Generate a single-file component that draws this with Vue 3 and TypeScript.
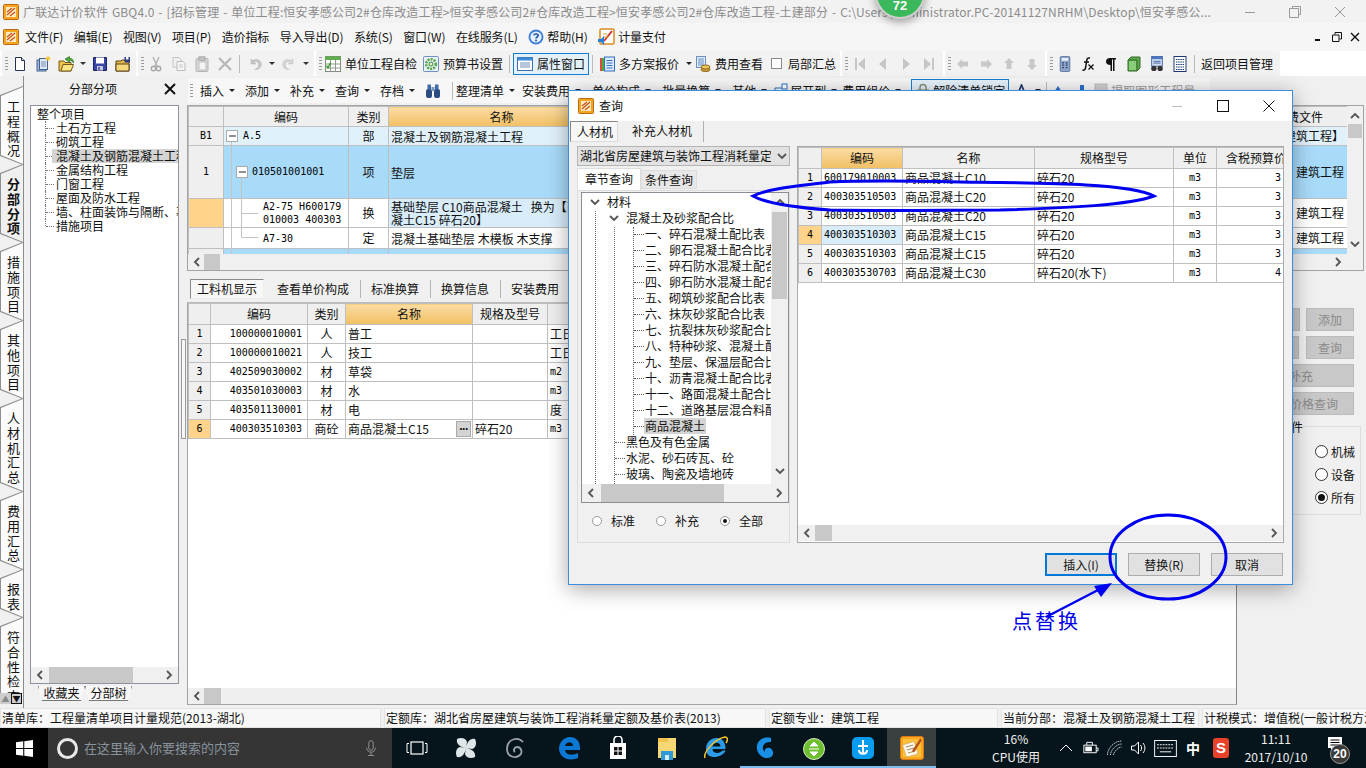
<script setup lang="ts">
interface TbItem {
  icon?: string
  text?: string
  caret?: boolean
  sep?: boolean
  grip?: boolean
  box?: boolean
  check?: boolean
  off?: boolean
  m?: number
  ml?: number
}

const menus = ['文件(F)', '编辑(E)', '视图(V)', '项目(P)', '造价指标', '导入导出(D)', '系统(S)', '窗口(W)', '在线服务(L)']

const toolGroups: { w: number; items: TbItem[] }[] = [
  { w: 134, items: [{ grip: true }, { icon: 'doc' }, { icon: 'docs' }, { icon: 'open' }, { caret: true }, { icon: 'save' }, { icon: 'saveas' }] },
  { w: 176, items: [{ grip: true }, { icon: 'cut' }, { icon: 'copy' }, { icon: 'paste' }, { icon: 'del' }, { sep: true }, { icon: 'undo' }, { caret: true }, { icon: 'redo' }, { caret: true }] },
  {
    w: 524,
    items: [
      { grip: true },
      { icon: 'check', text: '单位工程自检' },
      { icon: 'gear', text: '预算书设置' },
      { sep: true },
      { icon: 'prop', text: '属性窗口', box: true },
      { sep: true },
      { icon: 'multi', text: '多方案报价', caret: true },
      { icon: 'fee', text: '费用查看', ml: -3 },
      { check: true, text: '局部汇总' },
    ],
  },
  { w: 101, items: [{ grip: true }, { icon: 'first' }, { icon: 'prev' }, { icon: 'next' }, { icon: 'last' }] },
  { w: 100, items: [{ grip: true }, { icon: 'aleft' }, { icon: 'aright' }, { icon: 'aup' }, { icon: 'adown' }] },
  {
    w: 233,
    items: [
      { grip: true },
      { icon: 'calc' },
      { icon: 'fx' },
      { icon: 'para' },
      { icon: 'cube' },
      { icon: 'sheet' },
      { icon: 'list' },
      { sep: true },
      { text: '返回项目管理' },
    ],
  },
]

const tool2: TbItem[] = [
  { grip: true },
  { text: '插入', caret: true, m: 8 },
  { text: '添加', caret: true, m: 8 },
  { text: '补充', caret: true, m: 8 },
  { text: '查询', caret: true, m: 8 },
  { text: '存档', caret: true, m: 8 },
  { icon: 'bino', m: 8 },
  { sep: true },
  { text: '整理清单', caret: true, m: 5 },
  { text: '安装费用', caret: true, m: 9 },
  { text: '单价构成', caret: true, m: 9 },
  { text: '批量换算', caret: true, m: 9 },
  { text: '其他', caret: true, m: 3 },
  { icon: 'expand', text: '展开到', caret: true, m: 3 },
  { text: '费用组价', caret: true, m: 9 },
  { icon: 'lock', text: '解除清单锁定', box: true, m: 4 },
  { icon: 'font', caret: true, m: 2 },
  { sep: true },
  { icon: 'bup', m: 6 },
  { icon: 'bdown', m: 1 },
  { icon: 'pic', text: '提取图形工程量', off: true, m: 0 },
]

const sideTabs = ['工程概况', '分部分项', '措施项目', '其他项目', '人材机汇总', '费用汇总', '报表', '符合性检查']
const tabHeight = (t: string) => `${15 * t.length + 19}px`

const treeItems = ['土石方工程', '砌筑工程', '混凝土及钢筋混凝土工程', '金属结构工程', '门窗工程', '屋面及防水工程', '墙、柱面装饰与隔断、幕墙工程', '措施项目']

const upperCols = [35, 125, 40, 226, 652, 81]
const upperRows = [
  { cls: 'r-part', head: 'B1', code: 'A.5', kind: '部', name: '混凝土及钢筋混凝土工程', file: '【建筑工程】', pad: 'p1' },
  { cls: 'r-item', head: '1', code: '010501001001', kind: '项', name: '垫层', file: '建筑工程', pad: 'p2' },
  { cls: 'r-swap', head: '', code: 'A2-75 H600179 010003 400303', kind: '换', name: '基础垫层 C10商品混凝土\u00a0\u00a0\u00a0换为【商品混凝土C15 碎石20】', file: '建筑工程', pad: 'p3' },
  { cls: 'r-norm', head: '', code: 'A7-30', kind: '定', name: '混凝土基础垫层 木模板 木支撑', file: '建筑工程', pad: 'p3' },
  { cls: 'r-tail', head: '', code: '', kind: '', name: '', file: '', pad: 'p1' },
]

const lowerTabs = ['工料机显示', '查看单价构成', '标准换算', '换算信息', '安装费用']
const lowerCols = [22, 97, 38, 127, 75, 690]
const lowerRows = [
  ['1', '100000010001', '人', '普工', '', '工日'],
  ['2', '100000010021', '人', '技工', '', '工日'],
  ['3', '402509030002', '材', '草袋', '', 'm2'],
  ['4', '403501030003', '材', '水', '', 'm3'],
  ['5', '403501130001', '材', '电', '', '度'],
  ['6', '400303510303', '商砼', '商品混凝土C15', '碎石20', 'm3'],
]

const sideButtons = [
  { t: '添加', cls: 'narrow', twin: 'twin-a' },
  { t: '查询', cls: 'narrow', twin: 'twin-b' },
  { t: '补充', cls: 'wide w-a', twin: '' },
  { t: '价格查询', cls: 'wide w-b', twin: '' },
]
const sideRadios = ['机械', '设备', '所有']

const dlgTree = [
  { t: '材料', lv: 0, open: true },
  { t: '混凝土及砂浆配合比', lv: 1, open: true },
  { t: '一、碎石混凝土配比表', lv: 2 },
  { t: '二、卵石混凝土配合比表', lv: 2 },
  { t: '三、碎石防水混凝土配合比表', lv: 2 },
  { t: '四、卵石防水混凝土配合比表', lv: 2 },
  { t: '五、砌筑砂浆配合比表', lv: 2 },
  { t: '六、抹灰砂浆配合比表', lv: 2 },
  { t: '七、抗裂抹灰砂浆配合比表', lv: 2 },
  { t: '八、特种砂浆、混凝土配合比表', lv: 2 },
  { t: '九、垫层、保温层配合比表', lv: 2 },
  { t: '十、沥青混凝土配合比表', lv: 2 },
  { t: '十一、路面混凝土配合比表', lv: 2 },
  { t: '十二、道路基层混合料配合比表', lv: 2 },
  { t: '商品混凝土', lv: 2, sel: true },
  { t: '黑色及有色金属', lv: 1 },
  { t: '水泥、砂石砖瓦、砼', lv: 1 },
  { t: '玻璃、陶瓷及墙地砖', lv: 1 },
]

const dlgCols = [23, 81, 132, 139, 43, 67]
const dlgRows = [
  ['600179010003', '商品混凝土C10', '碎石20', 'm3', '3'],
  ['400303510503', '商品混凝土C20', '碎石20', 'm3', '3'],
  ['400303510503', '商品混凝土C20', '碎石20', 'm3', '3'],
  ['400303510303', '商品混凝土C15', '碎石20', 'm3', '3'],
  ['400303510303', '商品混凝土C15', '碎石20', 'm3', '3'],
  ['400303530703', '商品混凝土C30', '碎石20(水下)', 'm3', '4'],
]

const statusPanes = [
  { w: 381, t: '清单库：工程量清单项目计量规范(2013-湖北)' },
  { w: 382, t: '定额库：湖北省房屋建筑与装饰工程消耗量定额及基价表(2013)' },
  { w: 229, t: '定额专业：建筑工程' },
  { w: 198, t: '当前分部：混凝土及钢筋混凝土工程' },
  { w: 165, t: '计税模式：增值税(一般计税方法)' },
]

const taskApps = [
  { icon: 'tb-fan' },
  { icon: 'tb-ring' },
  { icon: 'tb-edge', gap: true },
  { icon: 'tb-store' },
  { icon: 'tb-folder' },
  { icon: 'tb-ie' },
  { icon: 'tb-gbq', on: true },
  { icon: 'tb-green', on: true },
  { icon: 'tb-cross', on: true },
  { icon: 'tb-app', on: true, active: true },
]
</script>

<template>
  <div class="desk">
    <svg class="defs" width="0" height="0" aria-hidden="true">
      <symbol id="i-app" viewBox="0 0 16 16">
        <rect x=".5" y=".5" width="15" height="15" rx="1" fill="#f3a51f" stroke="#b96a10" />
        <rect x="3" y="3" width="10" height="10" fill="#fbe9c4" />
        <path d="M4 11 12 4M4 8l5-4M7 12l5-4" stroke="#c8541a" stroke-width="1.3" />
      </symbol>
      <symbol id="i-pay" viewBox="0 0 18 18">
        <rect x="2" y="1" width="14" height="15" rx="1" fill="#fff" stroke="#d98a20" stroke-width="1.5" />
        <path d="M6 13 14 3" stroke="#d0342a" stroke-width="2" />
        <path d="M5 9h5M5 6h4" stroke="#e0a040" />
        <path d="M0 11h3l3-3v9l-3-3H0z" fill="#2a7fd6" />
      </symbol>
      <symbol id="i-help" viewBox="0 0 16 16">
        <circle cx="8" cy="8" r="7.5" fill="#3f7fd8" />
        <circle cx="8" cy="8" r="5.6" fill="#e8f2ff" />
        <path d="M5.8 6.3C6 4.6 10.2 4.5 10.2 6.6 10.2 8 8 8 8 9.6" fill="none" stroke="#1d55b0" stroke-width="1.6" />
        <rect x="7.2" y="10.6" width="1.7" height="1.7" fill="#1d55b0" />
      </symbol>
      <symbol id="i-doc" viewBox="0 0 16 16">
        <path d="M3.5 1.5h6l3 3v10h-9z" fill="#fff" stroke="#26364f" />
        <path d="M9.5 1.5v3h3" fill="#d5dcea" stroke="#26364f" />
      </symbol>
      <symbol id="i-docs" viewBox="0 0 16 16">
        <rect x="2" y="4" width="9" height="11" fill="#9db7de" stroke="#44618f" />
        <rect x="4.500" y="2.500" width="8" height="11" fill="#dfe8f5" stroke="#44618f" />
        <path d="M6 6h5M6 8h5M6 10h5" stroke="#7890b5" />
        <path d="M13 0v5M10.500 2.500h5M11.300 .8l3.400 3.400M14.700 .8l-3.400 3.400" stroke="#f3c41f" />
      </symbol>
      <symbol id="i-open" viewBox="0 0 16 16">
        <path d="M1 5h5l1 1.500h6V15H1z" fill="#edc24a" stroke="#76591a" />
        <path d="M3 15 5 8.500h10.500L13 15z" fill="#fbe388" stroke="#76591a" />
        <path d="M7 3 11.500 .5V2.300C14.500 2.300 15.500 4 15.500 7 14.500 5 13 4.500 11.500 4.500V6.500z" fill="#4fa83a" stroke="#26681c" stroke-width=".6" />
      </symbol>
      <symbol id="i-save" viewBox="0 0 16 16">
        <path d="M1.500 1.500h13v13h-13z" fill="#3846a4" stroke="#1d2560" />
        <rect x="4" y="1.500" width="8" height="6" fill="#fff" />
        <rect x="5" y="10" width="6" height="4.500" fill="#c7cbe0" />
        <rect x="6.300" y="11" width="1.500" height="3" fill="#3846a4" />
      </symbol>
      <symbol id="i-saveas" viewBox="0 0 16 16">
        <path d="M1 5h5l1-1h7v11H1z" fill="#e7b84a" stroke="#5a4314" />
        <path d="M1 8h13v7H1z" fill="#f6d97c" stroke="#5a4314" />
        <rect x="9.500" y="1" width="5.500" height="5.500" fill="#2c3a84" />
        <rect x="11" y="1" width="2.500" height="2.500" fill="#fff" />
      </symbol>
      <symbol id="i-cut" viewBox="0 0 16 16">
        <path d="M5 1 9 10M11 1 7 10" stroke="#b9b9b9" stroke-width="1.600" />
        <circle cx="5.500" cy="12.500" r="2.200" fill="none" stroke="#a8a8a8" stroke-width="1.400" />
        <circle cx="10.500" cy="12.500" r="2.200" fill="none" stroke="#a8a8a8" stroke-width="1.400" />
      </symbol>
      <symbol id="i-copy" viewBox="0 0 16 16">
        <path d="M2 1.500h6l2 2V11H2z" fill="#f0f0f0" stroke="#c2c2c2" />
        <path d="M6 5.500h6l2 2v7H6z" fill="#f4f4f4" stroke="#bcbcbc" />
        <path d="M8 9h4M8 11h4" stroke="#cacaca" />
      </symbol>
      <symbol id="i-paste" viewBox="0 0 16 16">
        <rect x="2" y="2.500" width="12" height="13" rx="1" fill="#d8d8d8" stroke="#b4b4b4" />
        <rect x="5" y=".8" width="6" height="3.500" fill="#c4c4c4" stroke="#aaa" />
        <rect x="5" y="6" width="7" height="8" fill="#f4f4f4" stroke="#c0c0c0" />
      </symbol>
      <symbol id="i-del" viewBox="0 0 16 16">
        <path d="M2 2 14 14M14 2 2 14" stroke="#b8b8b8" stroke-width="2.400" />
      </symbol>
      <symbol id="i-undo" viewBox="0 0 16 16">
        <path d="M4 3v5h5L7 6C9 4.500 12 6 11.500 9.500 11.300 11.500 9.500 13 7.500 13.500 11.500 14 14.500 11.500 14.300 8 14 4 9.500 2 6 4.500z" fill="#c6c6c6" stroke="#b0b0b0" stroke-width=".5" />
      </symbol>
      <symbol id="i-redo" viewBox="0 0 16 16">
        <path d="M12 3v5H7l2-2C7 4.500 4 6 4.500 9.500 4.700 11.500 6.500 13 8.500 13.500 4.500 14 1.500 11.500 1.700 8 2 4 6.500 2 10 4.500z" fill="#d4d4d4" stroke="#c0c0c0" stroke-width=".5" />
      </symbol>
      <symbol id="i-check" viewBox="0 0 16 16">
        <rect x=".5" y=".5" width="15" height="15" fill="#fff" stroke="#7d8a7a" />
        <rect x=".5" y=".5" width="15" height="3.500" fill="#5fae4f" />
        <path d="M5.500 4v12M10.500 4v12M0 8h16M0 12h16" stroke="#8d9a8a" />
        <path d="M1.500 9.500 3 12 5.500 6.800" fill="none" stroke="#27961f" stroke-width="1.300" />
      </symbol>
      <symbol id="i-gear" viewBox="0 0 16 16">
        <rect x=".5" y=".5" width="15" height="15" rx="1" fill="#e8f0fa" stroke="#6f8fbf" />
        <circle cx="8" cy="8" r="4.800" fill="none" stroke="#58a548" stroke-width="2.600" stroke-dasharray="2 1.100" />
        <circle cx="8" cy="8" r="2" fill="#dff0d4" stroke="#3c8a30" />
      </symbol>
      <symbol id="i-prop" viewBox="0 0 16 16">
        <rect x=".5" y="1.500" width="15" height="13" fill="#fff" stroke="#3972b8" />
        <rect x=".5" y="1.500" width="15" height="3" fill="#3f8ad6" />
        <path d="M3 7h10M3 9h10M3 11h10" stroke="#6e8db5" />
      </symbol>
      <symbol id="i-multi" viewBox="0 0 16 16">
        <rect x="1" y="2" width="4" height="13" fill="#d84d3f" />
        <rect x="3" y="2" width="4" height="13" fill="#4eaa42" />
        <rect x="5.500" y="1" width="10" height="14" fill="#dfeafa" stroke="#2f6fc2" />
        <path d="M7.500 4.500h6M7.500 7h6M7.500 9.500h6M7.500 12h6" stroke="#2f6fc2" />
      </symbol>
      <symbol id="i-fee" viewBox="0 0 16 16">
        <rect x="1.500" y=".5" width="9" height="11" fill="#e0ecfa" stroke="#6d8fc0" />
        <path d="M3 3h6M3 5h6M3 7h6M3 9h6" stroke="#6d8fc0" />
        <ellipse cx="10.500" cy="13.500" rx="4.500" ry="2" fill="#d3a23c" stroke="#8a6418" />
        <ellipse cx="10.500" cy="11" rx="4.500" ry="2" fill="#ecc760" stroke="#8a6418" />
      </symbol>
      <symbol id="i-first" viewBox="0 0 16 16"><path d="M3 2h2v12H3zM13 2v12L6 8z" fill="#c6c6c6" /></symbol>
      <symbol id="i-prev" viewBox="0 0 16 16"><path d="M11 2v12L4 8z" fill="#c6c6c6" /></symbol>
      <symbol id="i-next" viewBox="0 0 16 16"><path d="M5 2v12l7-6z" fill="#c6c6c6" /></symbol>
      <symbol id="i-last" viewBox="0 0 16 16"><path d="M11 2h2v12h-2zM3 2v12l7-6z" fill="#c6c6c6" /></symbol>
      <symbol id="i-aleft" viewBox="0 0 16 16"><path d="M7 3 2 8l5 5V10.500h6v-5H7z" fill="#c8c8c8" /></symbol>
      <symbol id="i-aright" viewBox="0 0 16 16"><path d="M9 3l5 5-5 5V10.500H3v-5h6z" fill="#c8c8c8" /></symbol>
      <symbol id="i-aup" viewBox="0 0 16 16"><path d="M8 2l5 5H10.500v6h-5V7H3z" fill="#c8c8c8" /></symbol>
      <symbol id="i-adown" viewBox="0 0 16 16"><path d="M8 14l5-5H10.500V3h-5v6H3z" fill="#c8c8c8" /></symbol>
      <symbol id="i-calc" viewBox="0 0 16 20">
        <rect x="2" y=".5" width="12" height="19" rx="1.500" fill="#8ea4cb" stroke="#4e648f" />
        <rect x="4" y="2.500" width="8" height="3.500" fill="#e6eefb" />
        <path d="M4.500 8.500h2M9 8.500h2M4.500 11.500h2M9 11.500h2M4.500 14.500h2M9 14.500h2" stroke="#24375f" stroke-width="1.500" />
      </symbol>
      <symbol id="i-fx" viewBox="0 0 16 16">
        <path d="M10 2C7 1.500 7 3 6.500 6L5.500 12C5 14 4 14.500 2.500 14" fill="none" stroke="#111" stroke-width="1.500" />
        <path d="M4 6h5M8.500 8.500l5 5M13.500 8.500l-5 5" stroke="#111" stroke-width="1.300" />
      </symbol>
      <symbol id="i-para" viewBox="0 0 16 16">
        <path d="M7 2h6v1.500h-1.500V15H10V3.500H9V15H7.500V9C4.500 9 3 7.500 3 5.500S4.500 2 7 2z" fill="#111" />
      </symbol>
      <symbol id="i-cube" viewBox="0 0 16 16">
        <path d="M2 4 5 1h9v11l-3 3H2z" fill="#5da84d" stroke="#2f6b26" />
        <path d="M2 4h9v11" fill="none" stroke="#2f6b26" />
        <path d="M3 5h7v9H3z" fill="#8bcc7b" />
      </symbol>
      <symbol id="i-sheet" viewBox="0 0 16 18">
        <rect x="2" y=".5" width="12" height="11" fill="#cfdcf3" stroke="#3f5f9c" />
        <rect x="2" y=".5" width="12" height="3" fill="#4b76c2" />
        <path d="M4 6h8M4 8h8" stroke="#3f5f9c" />
        <circle cx="4.500" cy="14" r="3" fill="#333" />
        <circle cx="11.500" cy="14" r="3" fill="#333" />
      </symbol>
      <symbol id="i-list" viewBox="0 0 16 16">
        <rect x="2" y=".5" width="12" height="15" fill="#fff" stroke="#20386e" />
        <path d="M4 3.500h8M4 6h8M4 8.500h8M4 11h8M4 13.500h8" stroke="#20386e" stroke-dasharray="1.500 .7" />
      </symbol>
      <symbol id="i-bino" viewBox="0 0 16 16">
        <rect x="1" y="6" width="6" height="9" rx="2" fill="#2b4c80" />
        <rect x="9" y="6" width="6" height="9" rx="2" fill="#2b4c80" />
        <rect x="2.500" y="1.500" width="3.500" height="5" fill="#3f6aa8" />
        <rect x="10" y="1.500" width="3.500" height="5" fill="#3f6aa8" />
        <rect x="6.500" y="4" width="3" height="4" fill="#7a93bb" />
      </symbol>
      <symbol id="i-expand" viewBox="0 0 16 16">
        <rect x="10" y="1" width="5" height="5" fill="#fff" stroke="#2d6fc4" />
        <rect x="1" y="8" width="4" height="4" fill="#5b9bd8" />
        <rect x="7" y="9" width="4" height="4" fill="#5b9bd8" />
        <path d="M3 8V5h7" fill="none" stroke="#2d6fc4" />
      </symbol>
      <symbol id="i-lock" viewBox="0 0 16 16">
        <path d="M5 7V4.500a3 3 0 0 1 6 0V7" fill="none" stroke="#8a8a70" stroke-width="1.400" />
        <rect x="2.500" y="7" width="11" height="8" fill="#d8c890" stroke="#8a7a40" />
      </symbol>
      <symbol id="i-font" viewBox="0 0 16 16">
        <path d="M2 13 7 1h1l5 12h-2L9.500 9h-4L4 13zM6.200 7.500h2.600L7.500 4z" fill="#20386e" />
        <path d="M10 10h5v5h-5z" fill="#3f70c8" />
      </symbol>
      <symbol id="i-bup" viewBox="0 0 16 16"><path d="M8 3l6 9H2z" fill="#2d6fd0" /></symbol>
      <symbol id="i-bdown" viewBox="0 0 16 16"><path d="M6 2h4v12H6z" fill="#2d6fd0" /></symbol>
      <symbol id="i-pic" viewBox="0 0 16 16"><rect x="2" y="1" width="12" height="14" fill="#cfcfcf" stroke="#bdbdbd" /></symbol>

      <symbol id="i-chev-l" viewBox="0 0 8 10"><path d="M6 1 2 5l4 4" fill="none" stroke="#555" stroke-width="1.800" /></symbol>
      <symbol id="i-chev-r" viewBox="0 0 8 10"><path d="M2 1l4 4-4 4" fill="none" stroke="#555" stroke-width="1.800" /></symbol>
      <symbol id="i-chev-u" viewBox="0 0 10 8"><path d="M1 6l4-4 4 4" fill="none" stroke="#555" stroke-width="1.800" /></symbol>
      <symbol id="i-chev-d" viewBox="0 0 10 8"><path d="M1 2l4 4 4-4" fill="none" stroke="#555" stroke-width="1.800" /></symbol>

      <symbol id="i-tb-win" viewBox="0 0 16 16"><path d="M0 2.200 6.800 1.200v6.400H0zM7.800 1.100 16 0v7.600H7.800zM0 8.500h6.800v6.300L0 13.800zM7.800 8.500H16V16l-8.200-1.100z" fill="#fff" /></symbol>
      <symbol id="i-tb-mic" viewBox="0 0 16 20">
        <rect x="5.500" y="1" width="5" height="11" rx="2.500" fill="none" stroke="#9a9a9a" />
        <path d="M3 9c0 7 10 7 10 0M8 14.500V18M4.500 18h7" fill="none" stroke="#9a9a9a" />
      </symbol>
      <symbol id="i-tb-view" viewBox="0 0 22 16">
        <rect x="5" y="2" width="12" height="12" fill="none" stroke="#fff" stroke-width="1.200" />
        <path d="M3 3.500H1v9h2M19 3.500h2v9h-2" fill="none" stroke="#fff" />
      </symbol>
      <symbol id="i-tb-fan" viewBox="0 0 24 24">
        <path d="M12 12C6 11 2 8 3 3c4-2 9-1 10 3zM12 12c1-6 4-10 9-9 2 4 1 9-3 10zM12 12c6 1 10 4 9 9-4 2-9 1-10-3zM12 12c-1 6-4 10-9 9-2-4-1-9 3-10z" fill="#dfe6e8" />
      </symbol>
      <symbol id="i-tb-ring" viewBox="0 0 24 24">
        <path d="M20 6C15 0 4 3 4 13c0 8 9 10 13 6 3-3 1-8-3-8-3 0-4 4-2 5" fill="none" stroke="#9ca3a6" stroke-width="1.800" />
      </symbol>
      <symbol id="i-tb-edge" viewBox="0 0 24 24">
        <path d="M2 13C2 6 7 1 13 1c6 0 10 4 10 11v2H8c0 5 8 6 13 3v5c-6 3-18 2-19-9zM8 10h8c0-5-7-5-8 0z" fill="#0a78d4" />
      </symbol>
      <symbol id="i-tb-store" viewBox="0 0 24 24">
        <path d="M4 7h16v16H4z" fill="#fff" />
        <path d="M8 7V4a4 4 0 0 1 8 0v3" fill="none" stroke="#fff" stroke-width="1.600" />
        <path d="M8 11h3.500v3.500H8zM12.500 11H16v3.500h-3.500zM8 15.500h3.500V19H8zM12.500 15.500H16V19h-3.500z" fill="#111" />
      </symbol>
      <symbol id="i-tb-folder" viewBox="0 0 24 24">
        <path d="M3 2h18v20H3z" fill="#f7d774" />
        <path d="M3 2h10v4H3z" fill="#f2c24f" />
        <path d="M6 15h12v9H6z" fill="#2f9ad8" />
        <path d="M10 19h4v5h-4z" fill="#fff" opacity=".8" />
      </symbol>
      <symbol id="i-tb-ie" viewBox="0 0 24 24">
        <path d="M2 13C2 6 7 2 12.500 2c6 0 9 4.500 9 11h-13c0 5 7.500 5 10 1.500h3C19 22 2 25 2 13zM8.500 10.500h8c0-5-7.500-5-8 0z" fill="#2b9be8" />
        <path d="M1 22C-1 17 10 3 21 1c3 0 3 3 1 6" fill="none" stroke="#f3c32a" stroke-width="1.500" />
      </symbol>
      <symbol id="i-tb-gbq" viewBox="0 0 24 24">
        <path d="M18 2C9 0 3 6 4 13c1 7 9 11 14 8 3-2 3-7-1-9-3-1-6 1-5 4-5-4-1-11 6-10z" fill="#1a8fe6" />
      </symbol>
      <symbol id="i-tb-green" viewBox="0 0 24 24">
        <circle cx="12" cy="13" r="10.500" fill="#6ebf2f" stroke="#d8ecc0" />
        <path d="M7 13h10M12 6l-4 4h8zM12 20l-4-4h8z" fill="#fff" stroke="#fff" />
      </symbol>
      <symbol id="i-tb-cross" viewBox="0 0 24 24">
        <rect x="1" y="1" width="22" height="22" rx="5" fill="#0a9cf0" />
        <path d="M12 4v13M7 10h10M8 14c0 5 8 5 8 0" fill="none" stroke="#fff" stroke-width="2" />
      </symbol>
      <symbol id="i-tb-app" viewBox="0 0 24 24">
        <rect x=".5" y=".5" width="23" height="23" rx="2.500" fill="#f8a81f" stroke="#d9780f" />
        <rect x="3" y="3" width="18" height="18" fill="#fdbf3a" />
        <path d="M2.500 9 14 5.500 18 18 6.500 21z" fill="#fff8e8" stroke="#c9a060" stroke-width=".6" />
        <path d="M6 11 13 9M7 14l7-2M8 17l7-2" stroke="#a08a70" />
        <path d="M12 15 20 2.500l2 1.500-8 12.500z" fill="#b5521b" />
      </symbol>
      <symbol id="i-tb-batt" viewBox="0 0 18 16">
        <rect x="2" y="5" width="13" height="8" fill="none" stroke="#fff" />
        <path d="M5 5V2h6v3M15 8h2v3h-2" fill="none" stroke="#fff" />
        <rect x="3.500" y="6.500" width="7" height="5" fill="#fff" />
      </symbol>
      <symbol id="i-tb-wifi" viewBox="0 0 16 16">
        <path d="M1 15C1 8 8 1 15 1M4 15c0-5 6-11 11-11M7 15c0-3 5-8 8-8" fill="none" stroke="#ccc" stroke-dasharray="1.500 .7" />
      </symbol>
      <symbol id="i-tb-vol" viewBox="0 0 16 16">
        <path d="M1 6h3l4-4v12l-4-4H1z" fill="none" stroke="#fff" />
        <path d="M10 5c1.500 2 1.500 4 0 6M12.500 3c2.500 3 2.500 7 0 10" fill="none" stroke="#fff" />
      </symbol>
      <symbol id="i-tb-kbd" viewBox="0 0 24 18">
        <rect x=".5" y=".5" width="23" height="17" fill="none" stroke="#fff" />
        <path d="M3 5h18M3 8.500h18" stroke="#fff" stroke-dasharray="2 1" />
        <path d="M6 12.500h12" stroke="#fff" />
      </symbol>
      <symbol id="i-tb-notif" viewBox="0 0 16 16">
        <path d="M1 1h14v11H6l-2 3v-3H1z" fill="#fff" />
        <path d="M3.500 4h9M3.500 6.500h9M3.500 9h9" stroke="#000" />
      </symbol>
    </svg>

    <header class="titlebar">
      <svg class="ico"><use href="#i-app" /></svg>
      <span class="title-text">广联达计价软件 GBQ4.0 - [招标管理 - 单位工程:恒安孝感公司2#仓库改造工程&gt;恒安孝感公司2#仓库改造工程&gt;恒安孝感公司2#仓库改造工程-土建部分 - C:\Users\Administrator.PC-20141127NRHM\Desktop\恒安孝感公...</span>
      <span class="win-ctl">
        <svg width="12" height="12"><path d="M1 6.500h10" stroke="#999" /></svg>
        <svg width="12" height="12"><path d="M3.500 2.500v-2h8v8h-2M.5 2.500h9v9h-9z" fill="none" stroke="#999" /></svg>
        <svg width="12" height="12"><path d="M1 1l10 10M11 1 1 11" stroke="#999" /></svg>
      </span>
    </header>

    <nav class="menubar">
      <svg class="ico menu-logo"><use href="#i-app" /></svg>
      <span v-for="m in menus" :key="m" class="menu">{{ m }}</span>
      <span class="menu help"><svg class="ico"><use href="#i-help" /></svg>帮助(H)</span>
      <span class="menu pay"><svg class="ico pay-ico"><use href="#i-pay" /></svg>计量支付</span>
      <span class="mdi-ctl">
        <svg width="10" height="10"><path d="M1 8h5" stroke="#111" stroke-width="2" /></svg>
        <svg width="10" height="10"><path d="M3 2.500V.5h6.500V7H7.500M.5 3h6.500v6.500H.5z" fill="none" stroke="#111" /></svg>
        <svg width="10" height="10"><path d="M1 1l8 8M9 1 1 9" stroke="#111" stroke-width="1.400" /></svg>
      </span>
    </nav>

    <div class="toolbar">
      <div v-for="(g, gi) in toolGroups" :key="gi" class="tb-group" :style="{ width: g.w + 'px' }">
        <template v-for="(it, i) in g.items" :key="i">
          <span v-if="it.grip" class="grip" />
          <span v-else-if="it.sep" class="tb-sep" />
          <span v-else-if="it.caret && !it.text" class="caret-only" />
          <span
            v-else
            class="tb-item"
            :class="{ boxed: it.box, solo: !it.text }"
            :style="it.ml ? { marginLeft: it.ml + 'px' } : undefined"
          >
            <svg v-if="it.icon" class="ico"><use :href="'#i-' + it.icon" /></svg>
            <span v-if="it.check" class="tb-check" />
            <span v-if="it.text">{{ it.text }}</span>
            <span v-if="it.caret" class="caret" />
          </span>
        </template>
      </div>
    </div>

    <div class="workspace">
      <aside class="rail">
        <div class="rail-list">
          <div
            v-for="(t, i) in sideTabs"
            :key="t"
            class="rail-tab"
            :class="{ active: i === 1 }"
            :style="{ height: tabHeight(t) }"
          >
            <div class="rail-inner"><span>{{ t }}</span></div>
          </div>
        </div>
        <div class="rail-arrows">
          <span class="ra off">▲</span>
          <span class="ra">▼</span>
        </div>
      </aside>

      <section class="tree-panel">
        <div class="panel-head">
          <span>分部分项</span>
          <svg width="12" height="12"><path d="M1 1l10 10M11 1 1 11" stroke="#111" stroke-width="2" /></svg>
        </div>
        <div class="tree-box">
          <div class="tree-scroll">
            <div class="tree-row root">整个项目</div>
            <div v-for="(t, i) in treeItems" :key="t" class="tree-row leaf" :class="{ last: i === treeItems.length - 1 }">
              <span class="tree-text" :class="{ sel: i === 2 }">{{ t }}</span>
            </div>
          </div>
          <div class="hbar">
            <svg class="chev"><use href="#i-chev-l" /></svg>
            <span class="hthumb tree-thumb" />
            <svg class="chev end"><use href="#i-chev-r" /></svg>
          </div>
        </div>
        <div class="bottom-tabs">
          <span class="btab">收藏夹</span>
          <span class="btab">分部树</span>
        </div>
      </section>

      <main class="content">
        <div class="tool2">
          <template v-for="(it, i) in tool2" :key="i">
            <span v-if="it.grip" class="grip" />
            <span v-else-if="it.sep" class="tb-sep" />
            <span v-else class="t2-item" :class="{ boxed: it.box, off: it.off }" :style="{ marginRight: it.m + 'px' }">
              <svg v-if="it.icon" class="ico"><use :href="'#i-' + it.icon" /></svg>
              <span v-if="it.text">{{ it.text }}</span>
              <span v-if="it.caret" class="caret" />
            </span>
          </template>
        </div>

        <div class="upper">
          <div class="upper-main">
            <div class="upper-view">
              <table class="grid up">
                <colgroup><col v-for="(w, i) in upperCols" :key="i" :style="{ width: w + 'px' }" /></colgroup>
                <thead>
                  <tr>
                    <th /><th>编码</th><th>类别</th><th class="hot">名称</th><th /><th class="ra-text">取费文件</th>
                  </tr>
                </thead>
                <tbody>
                  <tr v-for="r in upperRows" :key="r.cls" :class="r.cls">
                    <td class="rh mono">{{ r.head }}</td>
                    <td class="mono code-cell" :class="r.pad">{{ r.code }}</td>
                    <td class="ctr">{{ r.kind }}</td>
                    <td class="name-cell">{{ r.name }}</td>
                    <td />
                    <td class="ra-text">{{ r.file }}</td>
                  </tr>
                </tbody>
              </table>
              <svg class="tree-lines" width="100" height="150">
                <path d="M43.500 36v120M53.500 72v59.500M53.500 107.500h17M53.500 131.500h17" fill="none" stroke="#c4c4c4" />
                <g fill="#fff" stroke="#aaa">
                  <rect x="38.500" y="24.500" width="11" height="11" />
                  <rect x="48.500" y="60.500" width="11" height="11" />
                </g>
                <path d="M41 30h7M51 66h7" stroke="#222" />
              </svg>
            </div>
            <div class="hbar up-h">
              <svg class="chev"><use href="#i-chev-l" /></svg>
              <span class="hthumb" />
              <svg class="chev end"><use href="#i-chev-r" /></svg>
            </div>
          </div>
          <div class="vbar">
            <svg class="chev-v"><use href="#i-chev-u" /></svg>
            <span class="vthumb" />
            <svg class="chev-v end"><use href="#i-chev-d" /></svg>
          </div>
        </div>

        <div class="lower">
          <div class="lower-left">
            <div class="lower-tabs">
              <span v-for="(t, i) in lowerTabs" :key="t" class="ltab" :class="{ on: i === 0 }">{{ t }}</span>
            </div>
            <div class="lower-grid">
              <div class="lower-view">
                <table class="grid lo">
                  <colgroup><col v-for="(w, i) in lowerCols" :key="i" :style="{ width: w + 'px' }" /></colgroup>
                  <thead>
                    <tr><th /><th>编码</th><th>类别</th><th class="hot">名称</th><th>规格及型号</th><th class="left">单位</th></tr>
                  </thead>
                  <tbody>
                    <tr v-for="(r, i) in lowerRows" :key="r[0]">
                      <td class="rh mono" :class="{ cur: i === 5 }">{{ r[0] }}</td>
                      <td class="mono lo-code">{{ r[1] }}</td>
                      <td class="ctr">{{ r[2] }}</td>
                      <td class="pick-cell">{{ r[3] }}<span v-if="i === 5" class="pick">...</span></td>
                      <td>{{ r[4] }}</td>
                      <td :class="{ mono: r[5].startsWith('m') }">{{ r[5] }}</td>
                    </tr>
                  </tbody>
                </table>
              </div>
              <div class="hbar lo-h">
                <svg class="chev"><use href="#i-chev-l" /></svg>
                <span class="hthumb" />
              </div>
            </div>
          </div>
          <aside class="side">
            <div v-for="b in sideButtons" :key="b.t" class="side-row">
              <span v-if="b.twin" class="side-btn" :class="b.twin" />
              <span class="side-btn" :class="b.cls">{{ b.t }}</span>
            </div>
            <div class="side-group">
              <span class="group-label">条件</span>
              <label v-for="(r, i) in sideRadios" :key="r" class="side-radio">
                <span class="radio big" :class="{ dot: i === 2 }" />{{ r }}
              </label>
            </div>
          </aside>
        </div>
        <span class="handle" />
      </main>
    </div>

    <footer class="status">
      <span v-for="p in statusPanes" :key="p.t" class="pane" :style="{ width: p.w + 'px' }">{{ p.t }}</span>
    </footer>

    <footer class="taskbar">
      <span class="start"><svg class="tb-win"><use href="#i-tb-win" /></svg></span>
      <span class="search">
        <span class="cortana" />
        <span class="placeholder">在这里输入你要搜索的内容</span>
        <svg class="mic"><use href="#i-tb-mic" /></svg>
      </span>
      <span class="task-view"><svg class="tv"><use href="#i-tb-view" /></svg></span>
      <span
        v-for="a in taskApps"
        :key="a.icon"
        class="task-app"
        :class="{ on: a.on, active: a.active, gap: a.gap }"
      >
        <svg class="task-ico"><use :href="'#i-' + a.icon" /></svg>
      </span>
      <span class="cpu">16%<br />CPU使用</span>
      <span class="tray up">
        <svg width="14" height="8"><path d="M1 7l6-6 6 6" fill="none" stroke="#fff" /></svg>
      </span>
      <span class="tray"><svg class="tr-i"><use href="#i-tb-batt" /></svg></span>
      <span class="tray"><svg class="tr-i"><use href="#i-tb-wifi" /></svg></span>
      <span class="tray"><svg class="tr-i"><use href="#i-tb-vol" /></svg></span>
      <span class="tray kbd"><svg class="kb-i"><use href="#i-tb-kbd" /></svg></span>
      <span class="tray ime">中</span>
      <span class="tray sogou"><span class="sg">S</span></span>
      <span class="clock">11:11<br />2017/10/10</span>
      <span class="notif">
        <svg class="nt-i"><use href="#i-tb-notif" /></svg>
        <span class="nt-badge">20</span>
      </span>
    </footer>

    <div class="score">72</div>

    <div class="dialog">
      <div class="dlg-title">
        <svg class="ico"><use href="#i-app" /></svg>
        <span class="dlg-name">查询</span>
        <span class="dlg-ctl">
          <svg width="12" height="12"><path d="M1 6.500h10" stroke="#bbb" /></svg>
          <svg width="12" height="12"><rect x=".5" y=".5" width="11" height="11" fill="none" stroke="#111" /></svg>
          <svg width="12" height="12"><path d="M.5.500l11 11M11.500.500l-11 11" stroke="#111" /></svg>
        </span>
      </div>
      <div class="dlg-tabs">
        <span class="dtab on">人材机</span>
        <span class="dtab">补充人材机</span>
      </div>
      <div class="dlg-main">
        <div class="dlg-left">
          <div class="combo">
            <span class="combo-text">湖北省房屋建筑与装饰工程消耗量定额及基价表(2013)</span>
            <svg class="chev-v combo-ch"><use href="#i-chev-d" /></svg>
          </div>
          <div class="sub-tabs">
            <span class="stab on">章节查询</span>
            <span class="stab">条件查询</span>
          </div>
          <div class="sub-panel">
            <div class="dtree">
              <div class="dtree-body">
                <div class="dtree-view">
                  <span class="guide g1" /><span class="guide g2" /><span class="guide g3" />
                  <div v-for="n in dlgTree" :key="n.t" class="dnode" :class="'lv' + n.lv">
                    <svg v-if="n.open" class="chev-v node-ch"><use href="#i-chev-d" /></svg>
                    <span v-else class="tick" />
                    <span class="dnode-text" :class="{ sel: n.sel }">{{ n.t }}</span>
                  </div>
                </div>
                <div class="dvbar">
                  <svg class="chev-v"><use href="#i-chev-u" /></svg>
                  <span class="dvthumb" />
                  <svg class="chev-v end"><use href="#i-chev-d" /></svg>
                </div>
              </div>
              <div class="hbar dt-h">
                <svg class="chev"><use href="#i-chev-l" /></svg>
                <span class="hthumb" />
                <svg class="chev end"><use href="#i-chev-r" /></svg>
              </div>
            </div>
            <div class="radios">
              <label class="rd"><span class="radio" />标准</label>
              <label class="rd"><span class="radio" />补充</label>
              <label class="rd"><span class="radio dot" />全部</label>
            </div>
          </div>
        </div>
        <div class="dlg-right">
          <div class="dlg-view">
            <table class="grid dl">
              <colgroup><col v-for="(w, i) in dlgCols" :key="i" :style="{ width: w + 'px' }" /></colgroup>
              <thead>
                <tr><th /><th class="hot">编码</th><th>名称</th><th>规格型号</th><th>单位</th><th class="clip-head">含税预算价</th></tr>
              </thead>
              <tbody>
                <tr v-for="(r, i) in dlgRows" :key="i">
                  <td class="rh mono" :class="{ cur: i === 3 }">{{ i + 1 }}</td>
                  <td class="mono" :class="{ focus: i === 3 }">{{ r[0] }}</td>
                  <td>{{ r[1] }}</td>
                  <td>{{ r[2] }}</td>
                  <td class="ctr mono">{{ r[3] }}</td>
                  <td class="num mono">{{ r[4] }}</td>
                </tr>
              </tbody>
            </table>
          </div>
          <div class="hbar dl-h">
            <svg class="chev"><use href="#i-chev-l" /></svg>
            <span class="hthumb" />
            <svg class="chev end"><use href="#i-chev-r" /></svg>
          </div>
        </div>
      </div>
      <div class="dlg-btns">
        <button class="btn def">插入(I)</button>
        <button class="btn">替换(R)</button>
        <button class="btn">取消</button>
      </div>
    </div>

    <svg class="ink" width="1366" height="768" viewBox="0 0 1366 768">
      <g fill="none" stroke="#0000f0" stroke-width="3">
        <path d="M753 196C770 188 800 186 830 182 870 180 920 181 960 182 1040 183 1130 183 1154 196 1130 205 1070 208 1000 210 950 210 880 211 830 210 790 207 765 203 753 196z" />
        <ellipse cx="1168" cy="557" rx="58" ry="42" />
        <path d="M1046 617 1100 589" stroke-width="2.500" />
      </g>
      <path d="M1112 583 1094 586 1101 597z" fill="#0000f0" />
    </svg>
    <span class="ink-text">点替换</span>
  </div>
</template>

<style scoped>
.desk {
  position: relative;
  width: 1366px;
  height: 768px;
  overflow: hidden;
  display: flex;
  flex-direction: column;
  background: #f0f0f0;
  color: #111;
  font: 12px/16px "Noto Sans CJK SC", "Liberation Sans", sans-serif;
}
.defs {
  position: absolute;
}
.ico {
  width: 16px;
  height: 16px;
  flex: none;
}
.mono {
  font: 10px/14px "DejaVu Sans Mono", "Noto Sans CJK SC", monospace;
  color: #000;
}

/* title + menu */
.titlebar {
  flex: none;
  height: 23px;
  display: flex;
  align-items: center;
  padding-left: 3px;
  background: #f2f2f2;
}
.title-text {
  margin-left: 4px;
  width: 1205px;
  white-space: nowrap;
  overflow: hidden;
  color: #8c8c8c;
  letter-spacing: 0.15px;
  word-spacing: 1px;
}
.win-ctl {
  margin-left: 16px;
  display: flex;
  gap: 33px;
}
.menubar {
  flex: none;
  height: 28px;
  display: flex;
  align-items: center;
  padding-left: 3px;
  background: #f6f6f6;
  position: relative;
}
.menu-logo {
  margin-right: 6px;
}
.menu {
  margin-right: 10.5px;
  white-space: nowrap;
  letter-spacing: -0.1px;
}
.help {
  display: flex;
  gap: 3px;
  align-items: center;
}
.pay {
  display: flex;
  gap: 2px;
  align-items: center;
}
.pay-ico {
  width: 18px;
  height: 18px;
}
.mdi-ctl {
  margin-left: auto;
  margin-right: 6px;
  display: flex;
  gap: 8px;
}

/* toolbars */
.toolbar {
  flex: none;
  height: 25px;
  display: flex;
  gap: 2px;
  padding-left: 2px;
  background: #fff;
}
.tb-group {
  flex: none;
  display: flex;
  align-items: center;
  background: #f2f2f2;
  border-radius: 2px;
  white-space: nowrap;
}
.grip {
  flex: none;
  width: 3px;
  height: 14px;
  margin: 0 0 0 3px;
  background: repeating-linear-gradient(#999 0 1px, transparent 1px 3px);
}
.tb-sep {
  flex: none;
  width: 1px;
  height: 18px;
  margin: 0 3px;
  background: #bbb;
}
.tb-item {
  display: flex;
  align-items: center;
  gap: 4px;
  padding: 0 3px;
  height: 22px;
  box-sizing: border-box;
}
.tb-item.solo {
  width: 23px;
  justify-content: center;
  padding: 0;
}
.boxed {
  border: 1px solid #1580d0;
  background: #e4f1fb;
}
.tb-check {
  width: 9px;
  height: 9px;
  border: 1px solid #8a8a8a;
  background: #fff;
  margin: 0 2px 0 2px;
}
.caret {
  width: 0;
  height: 0;
  margin-left: 3px;
  border: 3px solid transparent;
  border-top: 3px solid #222;
  border-bottom: 0;
}
.caret-only {
  width: 0;
  height: 0;
  margin: 0 2px 0 3px;
  border: 3px solid transparent;
  border-top: 3px solid #333;
  border-bottom: 0;
}
.workspace {
  flex: 1;
  min-height: 0;
  display: flex;
}

/* left rail */
.rail {
  flex: none;
  width: 24px;
  display: flex;
  flex-direction: column;
  background: #f0f0f0;
  border-right: 1px solid #8c8c8c;
  box-sizing: border-box;
  overflow: hidden;
}
.rail-list {
  height: 617px;
  padding-top: 10px;
  box-sizing: border-box;
  overflow: hidden;
}
.rail-tab {
  width: 23px;
  background: #8f8f8f;
  clip-path: polygon(0 9px, 100% 0, 100% 100%, 0 calc(100% - 9px));
  box-sizing: border-box;
  padding: 1px 0 1px 1px;
  margin-bottom: -1px;
}
.rail-inner {
  height: 100%;
  background: #fbfbfb;
  clip-path: polygon(0 9px, 100% 0, 100% 100%, 0 calc(100% - 9px));
  display: flex;
  justify-content: center;
  padding-top: 13px;
  box-sizing: border-box;
}
.rail-inner span {
  writing-mode: vertical-rl;
  font-size: 13px;
  line-height: 16px;
  letter-spacing: 1.6px;
  white-space: nowrap;
  margin-left: 2px;
}
.rail-tab.active .rail-inner {
  background: #f0f0f0;
}
.rail-tab.active span {
  font-weight: 700;
}
.rail-arrows {
  display: flex;
  margin-top: 0;
  height: 11px;
}
.ra {
  width: 11px;
  height: 11px;
  box-sizing: border-box;
  border: 1px solid #111;
  background: #ccc;
  font-size: 8px;
  line-height: 9px;
  text-align: center;
}
.ra.off {
  border-color: #ccc;
  color: #888;
}

/* tree panel */
.tree-panel {
  flex: none;
  width: 161px;
  display: flex;
  flex-direction: column;
  background: #f0f0f0;
}
.panel-head {
  flex: none;
  height: 29px;
  display: flex;
  align-items: center;
  justify-content: space-between;
  padding: 0 9px 3px 45px;
  box-sizing: border-box;
}
.tree-box {
  flex: none;
  margin-left: 6px;
  width: 149px;
  height: 579px;
  box-sizing: border-box;
  border: 1px solid #8c939c;
  background: #fff;
  display: flex;
  flex-direction: column;
}
.tree-scroll {
  flex: 1;
  padding-top: 1px;
  overflow: hidden;
  background: #fff;
}
.tree-row {
  height: 14px;
  line-height: 14px;
  white-space: nowrap;
  position: relative;
}
.tree-row.root {
  padding-left: 6px;
}
.tree-row.leaf {
  padding-left: 25px;
}
.tree-row.leaf::before {
  content: "";
  position: absolute;
  left: 14px;
  top: 0;
  height: 14px;
  width: 6px;
  border-left: 1px dotted #777;
}
.tree-row.leaf.last::before {
  height: 7px;
}
.tree-row.leaf::after {
  content: "";
  position: absolute;
  left: 15px;
  top: 7px;
  width: 8px;
  border-top: 1px dotted #777;
}
.tree-text.sel {
  display: inline-block;
  background: #d4d4d4;
  width: 124px;
  padding-left: 4px;
  margin-left: -4px;
  overflow: hidden;
}
.tree-scroll .tree-text {
  position: relative;
  z-index: 1;
}
.hbar {
  flex: none;
  height: 16px;
  background: #f0f0f0;
  display: flex;
  align-items: center;
  position: relative;
}
.chev {
  width: 8px;
  height: 10px;
  flex: none;
  margin-left: 5px;
}
.chev.end {
  margin-left: auto;
  margin-right: 5px;
}
.hthumb {
  flex: none;
  height: 100%;
  background: #c8c8c8;
  margin-left: 5px;
}
.tree-thumb {
  width: 84px;
}
.bottom-tabs {
  display: flex;
  margin: 2px 0 0 14px;
}
.btab {
  width: 47px;
  height: 15px;
  line-height: 14px;
  text-align: center;
  background: #f7f7f7;
  border: 1px solid #777;
  border-top: 0;
  box-sizing: border-box;
  clip-path: polygon(0 0, 100% 0, calc(100% - 4px) 100%, 4px 100%);
}

/* content */
.content {
  flex: none;
  width: 1181px;
  margin-left: 2px;
  display: flex;
  flex-direction: column;
  position: relative;
  padding-top: 2px;
  box-sizing: border-box;
}
.tool2 {
  flex: none;
  width: 1022px;
  height: 25px;
  display: flex;
  align-items: center;
  margin-left: 1px;
  background: #f7f7f7;
  white-space: nowrap;
}
.tool2 .grip {
  margin: 0 6px 0 2px;
}
.tool2 .tb-sep {
  margin: 0 2px;
}
.t2-item {
  display: flex;
  align-items: center;
  gap: 2px;
  height: 24px;
  box-sizing: border-box;
  padding: 0 1px;
}
.t2-item.boxed {
  padding: 0 3px;
}
.t2-item.off {
  color: #9a9a9a;
}
.upper {
  flex: none;
  margin-top: 2px;
  width: 1177px;
  height: 166px;
  box-sizing: border-box;
  border: 1px solid #a0a4a8;
  display: flex;
}
.upper-main {
  flex: none;
  width: 1159px;
  display: flex;
  flex-direction: column;
}
.upper-view {
  flex: 1;
  position: relative;
  overflow: hidden;
}
.up-h .hthumb {
  width: 16px;
  margin-left: 3px;
}
.vbar {
  flex: 1;
  background: #f0f0f0;
  display: flex;
  flex-direction: column;
  align-items: center;
  padding-top: 6px;
}
.chev-v {
  width: 10px;
  height: 8px;
  flex: none;
}
.chev-v.end {
  margin-top: auto;
  margin-bottom: 22px;
}
.vthumb {
  width: 14px;
  height: 14px;
  margin-top: 4px;
  background: #c8c8c8;
}
.grid {
  table-layout: fixed;
  width: 100%;
  border-collapse: collapse;
  background: #fff;
}
.grid th,
.grid td {
  border: 1px solid #bfbfbf;
  padding: 0 2px;
  overflow: hidden;
  white-space: nowrap;
  font-weight: 400;
}
.grid th {
  background: #efefef;
  text-align: center;
  height: 19px;
}
.grid th.hot {
  background: linear-gradient(#fbdca3, #f1c063);
}
.grid .rh {
  background: #efefef;
  text-align: center;
  padding: 0;
}
.grid .rh.cur {
  background: #ffd48a;
}
.grid .ctr {
  text-align: center;
}
.grid .num {
  text-align: right;
}
.up thead th {
  height: 19px;
}
.up thead th.ra-text {
  text-align: right;
  padding-right: 24px;
}
.up tbody tr:nth-child(1) td {
  height: 18px;
}
.up tbody tr:nth-child(2) td {
  height: 52px;
}
.up tbody tr:nth-child(3) td {
  height: 28px;
}
.up tbody tr:nth-child(4) td {
  height: 20px;
}
.up tbody tr:nth-child(5) td {
  height: 10px;
}
.up td {
  font-size: 12px;
}
.up td.mono {
  font-size: 10px;
}
.up .name-cell {
  white-space: normal;
  line-height: 13px;
  word-break: break-all;
}
.up .ra-text {
  text-align: right;
  padding-right: 3px;
}
.code-cell.p1 {
  padding-left: 19px;
}
.code-cell.p2 {
  padding-left: 28px;
}
.code-cell.p3 {
  padding-left: 39px;
  white-space: normal;
  line-height: 13px;
}
.r-part td {
  background: #e1f1fc;
}
.r-item td {
  background: #a8daf9;
}
.r-swap td {
  background: #fff;
}
.r-swap .name-cell {
  background: #d8ecfa;
}
.r-swap .rh {
  background: #ffd48a;
}
.r-norm td {
  background: #fff;
}
.r-tail td {
  background: #a8daf9;
}
.grid tr .rh {
  background: #efefef;
}
.grid tr.r-swap .rh {
  background: #ffd48a;
}
.grid tr .rh.cur {
  background: #ffd48a;
}
.tree-lines {
  position: absolute;
  left: 0;
  top: 0;
  pointer-events: none;
}
.lower {
  flex: 1;
  min-height: 0;
  display: flex;
}
.lower-left {
  flex: none;
  width: 1050px;
  display: flex;
  flex-direction: column;
}
.lower-tabs {
  flex: none;
  height: 20px;
  margin-top: 8px;
  display: flex;
  align-items: center;
  padding-left: 3px;
}
.ltab {
  padding: 0 11px 0 10px;
  border-right: 1px solid #b5b5b5;
  line-height: 18px;
  white-space: nowrap;
}
.ltab.on {
  padding: 0 6px;
  border: 1px solid;
  border-color: #8a8a8a #eee #eee #8a8a8a;
  margin-right: 3px;
  background: #f7f7f7;
}
.lower-grid {
  flex: 1;
  min-height: 0;
  margin-top: 3px;
  border: 1px solid #a0a4a8;
  border-right-color: #888;
  border-top-color: #bbb;
  margin-bottom: 3px;
  display: flex;
  flex-direction: column;
  background: #fff;
}
.lower-view {
  flex: 1;
  overflow: hidden;
}
.lo thead th {
  height: 20px;
}
.lo td {
  height: 18px;
  line-height: 16px;
}
.lo-code {
  text-align: right;
  padding-right: 5px !important;
}
.pick-cell {
  position: relative;
}
.pick {
  position: absolute;
  right: 1px;
  top: 1px;
  width: 15px;
  height: 16px;
  background: #d4d4d4;
  border: 1px solid #aaa;
  box-sizing: border-box;
  text-align: center;
  font: 700 12px/9px "Liberation Sans", sans-serif;
  letter-spacing: -0.5px;
}
.lo-h {
  background: #efefef;
}
.lo-h .hthumb {
  width: 17px;
  margin-left: 3px;
}
.side {
  flex: 1;
  position: relative;
  padding-top: 37px;
  display: flex;
  flex-direction: column;
  align-items: flex-end;
  background: #f0f0f0;
}
.side-row {
  flex: none;
  display: flex;
  justify-content: flex-end;
  margin: 0 14px 5px 0;
}
.side-btn {
  height: 23px;
  box-sizing: border-box;
  border: 1px solid #bbb;
  background: #c8c8c8;
  color: #8a8a8a;
  line-height: 21px;
  flex: none;
  text-align: center;
}
.narrow {
  width: 48px;
}
.twin-a {
  width: 48px;
  margin-right: 6px;
}
.twin-b {
  width: 46px;
  margin-right: 7px;
}
.wide {
  width: 102px;
  text-align: right;
}
.w-a {
  padding-right: 40px;
}
.w-b {
  padding-right: 15px;
}
.side-group {
  width: 110px;
  height: 89px;
  margin: 6px 7px 0 0;
  border: 1px solid #ddd;
  box-sizing: border-box;
  position: relative;
  padding: 13px 0 0 63px;
}
.group-label {
  position: absolute;
  left: 27px;
  top: -8px;
  background: #f0f0f0;
  white-space: nowrap;
}
.side-radio {
  display: flex;
  align-items: center;
  gap: 3px;
  height: 23px;
  line-height: 16px;
  white-space: nowrap;
}
.radio {
  flex: none;
  width: 10px;
  height: 10px;
  border-radius: 50%;
  border: 1px solid #9a9a9a;
  background: #fff;
  box-sizing: border-box;
  position: relative;
}
.radio.big {
  width: 13px;
  height: 13px;
  border-color: #333;
}
.radio.dot::after {
  content: "";
  position: absolute;
  inset: 2px;
  border-radius: 50%;
  background: #111;
}
.handle {
  position: absolute;
  left: -6px;
  top: 263px;
  width: 5px;
  height: 100px;
  border: 1px solid #9a9a9a;
  box-sizing: border-box;
  background: #f7f7f7;
}

/* status + taskbar */
.status {
  flex: none;
  height: 20px;
  display: flex;
  gap: 3px;
  background: #f0f0f0;
}
.pane {
  flex: none;
  border: 1px solid #e4e4e4;
  background: #f7f7f7;
  box-sizing: border-box;
  padding-left: 1px;
  line-height: 18px;
  white-space: nowrap;
  overflow: hidden;
}
.taskbar {
  flex: none;
  height: 40px;
  display: flex;
  align-items: center;
  background: #06151b;
  color: #fff;
}
.start {
  flex: none;
  width: 48px;
  height: 40px;
  background: #000;
  display: flex;
  align-items: center;
  justify-content: center;
}
.tb-win {
  width: 17px;
  height: 17px;
}
.search {
  flex: none;
  width: 344px;
  height: 40px;
  background: #353535;
  display: flex;
  align-items: center;
  position: relative;
}
.cortana {
  width: 21px;
  height: 21px;
  border: 3px solid #e8e8e8;
  border-radius: 50%;
  box-sizing: border-box;
  margin-left: 9px;
}
.placeholder {
  margin-left: 6px;
  font-size: 13px;
  color: #87929c;
}
.mic {
  width: 14px;
  height: 19px;
  margin-left: auto;
  margin-right: 14px;
}
.task-view {
  flex: none;
  width: 49px;
  height: 40px;
  display: flex;
  align-items: center;
  justify-content: center;
}
.tv {
  width: 22px;
  height: 16px;
}
.task-app {
  flex: none;
  width: 49px;
  height: 40px;
  display: flex;
  align-items: center;
  justify-content: center;
  box-sizing: border-box;
}
.task-app.gap {
  margin-left: 5px;
}
.task-app.on {
  border-bottom: 2px solid #7dbcf0;
  padding-top: 2px;
}
.task-app.active {
  background: #3a4040;
}
.task-ico {
  width: 24px;
  height: 24px;
}
.cpu {
  flex: none;
  width: 60px;
  margin-left: 50px;
  text-align: center;
  font-size: 12px;
  line-height: 18px;
  color: #f0f0f0;
}
.tray {
  flex: none;
  width: 24px;
  height: 40px;
  display: flex;
  align-items: center;
  justify-content: center;
}
.tray.up {
  margin-left: 8px;
}
.tr-i {
  width: 17px;
  height: 16px;
}
.tray.kbd {
  width: 30px;
}
.kb-i {
  width: 23px;
  height: 17px;
}
.tray.ime {
  width: 26px;
  font-size: 14px;
  font-weight: 700;
}
.tray.sogou {
  width: 30px;
}
.sg {
  width: 16px;
  height: 20px;
  background: #e8432a;
  border-radius: 3px;
  font: 700 15px/20px "Liberation Sans", sans-serif;
  text-align: center;
}
.clock {
  flex: none;
  width: 80px;
  text-align: center;
  line-height: 18px;
  color: #f0f0f0;
}
.notif {
  flex: none;
  width: 50px;
  height: 40px;
  position: relative;
}
.nt-i {
  position: absolute;
  left: 11px;
  top: 8px;
  width: 16px;
  height: 16px;
}
.nt-badge {
  position: absolute;
  left: 14px;
  top: 16px;
  width: 20px;
  height: 20px;
  border-radius: 50%;
  background: #3a3a3a;
  border: 1px solid #999;
  box-sizing: border-box;
  font: 700 12px/18px "Liberation Sans", sans-serif;
  text-align: center;
}

/* floating */
.score {
  position: absolute;
  left: 875px;
  top: -31px;
  width: 50px;
  height: 50px;
  border-radius: 50%;
  border: 2px solid #cfcfcf;
  background: #3cb85c;
  box-shadow: 0 3px 8px rgba(0, 0, 0, 0.35);
  color: #fff;
  font: 700 13px/14px "Liberation Sans", sans-serif;
  display: flex;
  align-items: flex-end;
  justify-content: center;
  padding-bottom: 4px;
  box-sizing: border-box;
}
.dialog {
  position: absolute;
  left: 568px;
  top: 90px;
  width: 725px;
  height: 495px;
  box-sizing: border-box;
  border: 1px solid #3d8fdc;
  background: #f0f0f0;
  box-shadow: 0 4px 20px rgba(0, 0, 0, 0.35);
  display: flex;
  flex-direction: column;
}
.dlg-title {
  flex: none;
  height: 30px;
  background: #fff;
  display: flex;
  align-items: center;
  padding-left: 9px;
}
.dlg-name {
  margin-left: 5px;
}
.dlg-ctl {
  margin-left: auto;
  margin-right: 17px;
  display: flex;
  gap: 34px;
}
.dlg-tabs {
  flex: none;
  height: 21px;
  display: flex;
  padding-left: 1px;
}
.dtab {
  padding: 0 11px;
  line-height: 19px;
  border-right: 1px solid #b0b0b0;
  margin-right: 3px;
}
.dtab.on {
  padding: 0 6px;
  border: 1px solid;
  border-color: #888 #ddd #ddd #888;
  background: #f7f7f7;
  box-sizing: border-box;
  width: 48px;
  white-space: nowrap;
  overflow: hidden;
}
.dlg-main {
  flex: none;
  height: 397px;
  margin-top: 4px;
  padding: 0 8px;
  display: flex;
}
.dlg-left {
  flex: none;
  width: 213px;
  display: flex;
  flex-direction: column;
}
.combo {
  flex: none;
  height: 20px;
  background: #e2e2e2;
  border: 1px solid #b4b4b4;
  box-sizing: border-box;
  display: flex;
  align-items: center;
  padding-left: 2px;
}
.combo-text {
  width: 191px;
  overflow: hidden;
  white-space: nowrap;
}
.combo-ch {
  margin-left: 6px;
}
.sub-tabs {
  flex: none;
  height: 22px;
  margin-top: 2px;
  display: flex;
  align-items: flex-end;
}
.stab {
  height: 19px;
  line-height: 18px;
  width: 56px;
  text-align: center;
  background: #e8e8e8;
  border: 1px solid #ddd;
  box-sizing: border-box;
  margin-bottom: 1px;
}
.stab.on {
  width: 64px;
  height: 22px;
  line-height: 20px;
  background: #fff;
  border-bottom: 0;
  margin-bottom: 0;
}
.sub-panel {
  flex: 1;
  min-height: 0;
  background: #f0f0f0;
  border: 1px solid #ddd;
  box-sizing: border-box;
  padding: 1px 0 0 3px;
  display: flex;
  flex-direction: column;
}
.dtree {
  flex: none;
  width: 208px;
  height: 311px;
  box-sizing: border-box;
  border: 1px solid #8a8f96;
  display: flex;
  flex-direction: column;
  background: #f0f0f0;
}
.dtree-body {
  flex: none;
  height: 291px;
  display: flex;
}
.dtree-view {
  flex: none;
  width: 189px;
  height: 291px;
  overflow: hidden;
  background: #fff;
  padding-top: 1px;
  box-sizing: border-box;
  position: relative;
}
.guide {
  position: absolute;
  top: 18px;
  bottom: 0;
  border-left: 1px dotted #666;
}
.g1 {
  left: 13px;
}
.g2 {
  left: 32px;
  top: 34px;
}
.g3 {
  left: 51px;
  top: 34px;
  bottom: 41px;
}
.dnode {
  height: 16px;
  line-height: 16px;
  white-space: nowrap;
  display: flex;
  align-items: center;
  position: relative;
}
.dnode .node-ch {
  position: absolute;
  top: 4px;
  background: #fff;
}
.lv0 {
  padding-left: 25px;
}
.lv0 .node-ch {
  left: 8px;
}
.lv1 {
  padding-left: 44px;
}
.lv1 .node-ch {
  left: 27px;
}
.lv2 {
  padding-left: 63px;
}
.tick {
  position: absolute;
  top: 8px;
  width: 10px;
  border-top: 1px dotted #666;
}
.lv1 .tick {
  left: 33px;
}
.lv2 .tick {
  left: 52px;
}
.dnode-text.sel {
  background: #d4d4d4;
  padding: 0 1px;
  margin-left: -1px;
}
.dvbar {
  flex: 1;
  background: #f0f0f0;
  display: flex;
  flex-direction: column;
  align-items: center;
  padding-top: 5px;
}
.dvthumb {
  width: 15px;
  height: 87px;
  margin-top: 6px;
  background: #c8c8c8;
}
.dvbar .chev-v.end {
  margin-bottom: 9px;
}
.dt-h {
  height: 18px;
}
.dt-h .hthumb {
  width: 123px;
  margin-left: 6px;
}
.radios {
  display: flex;
  padding: 10px 0 0 11px;
  gap: 28px;
}
.rd {
  display: flex;
  align-items: center;
  gap: 9px;
  width: 36px;
  white-space: nowrap;
}
.dlg-right {
  flex: none;
  width: 487px;
  height: 397px;
  margin-left: 7px;
  border: 1px solid #a6a9ad;
  box-sizing: border-box;
  display: flex;
  flex-direction: column;
  background: #fff;
}
.dlg-view {
  flex: 1;
  overflow: hidden;
}
.dl thead th {
  height: 20px;
}
.dl th.clip-head {
  text-align: left;
  padding-left: 9px;
}
.dl td {
  height: 18px;
  line-height: 16px;
}
.dl td.focus {
  background: #d8ecfa;
}
.dl-h .hthumb {
  width: 17px;
  margin-left: 4px;
}
.dl-h {
  height: 16px;
  margin-bottom: 1px;
}
.dlg-btns {
  flex: none;
  display: flex;
  justify-content: flex-end;
  gap: 11px;
  padding: 10px 9px 0 0;
}
.btn {
  width: 72px;
  height: 23px;
  padding: 0;
  border: 1px solid #adadad;
  background: #e1e1e1;
  font: inherit;
  color: #111;
}
.btn.def {
  border: 2px solid #0078d7;
}
.ink {
  position: absolute;
  left: 0;
  top: 0;
  pointer-events: none;
}
.ink-text {
  position: absolute;
  left: 1012px;
  top: 608px;
  font: 20px/26px "Noto Sans CJK SC", sans-serif;
  letter-spacing: 3px;
  color: #0000e6;
  white-space: nowrap;
}
</style>

<style>
html,
body {
  margin: 0;
  overflow: hidden;
}
</style>
